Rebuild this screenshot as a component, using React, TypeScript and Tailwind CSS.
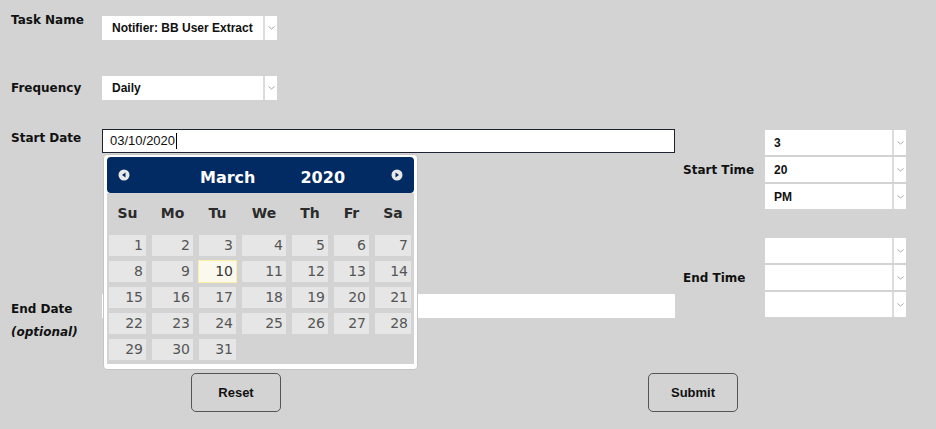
const label = "font-['DejaVu_Sans',Verdana,sans-serif] text-[12px] font-bold leading-[14px] text-[#111]";

const Chevron = () => (
  <svg width="7" height="4" viewBox="0 0 7 4">
    <path d="M0.5 0.5 L3.5 3 L6.5 0.5" fill="none" stroke="#a8a8a8" strokeWidth="1" />
  </svg>
);

const NavIcon = ({ dir }: { dir: "prev" | "next" }) => (
  <svg width="12" height="12" viewBox="0 0 12 12">
    <circle cx="6" cy="6" r="5.5" fill="#e8e8e8" />
    {dir === "prev" ? (
      <path d="M4 6 L7.5 3.5 L7.5 8.5 Z" fill="#022b63" />
    ) : (
      <path d="M8 6 L4.5 3.5 L4.5 8.5 Z" fill="#022b63" />
    )}
  </svg>
);

function Select({ value, className }: { value?: string; className: string }) {
  return (
    <div className={`flex bg-white ${className}`}>
      <div className="flex flex-1 items-center pl-[9px] font-['Liberation_Sans',Arial,sans-serif] text-[12px] font-bold text-[#111]">
        {value}
      </div>
      <div className="flex w-[14px] items-center justify-center border-l-2 border-[#dcdcdc]">
        <Chevron />
      </div>
    </div>
  );
}

const days = ["Su", "Mo", "Tu", "We", "Th", "Fr", "Sa"];
const cols = "grid grid-cols-[39px_43px_39px_46px_38px_37px_38px] gap-x-[4px]";

function Calendar() {
  return (
    <div className="absolute left-[103px] top-[154px] w-[315px] rounded-[4px] border border-[#c5c5c5] bg-white px-[3px] pt-[2px] pb-[5px] font-['DejaVu_Sans',Verdana,sans-serif]">
      <div className="flex h-[36px] items-center rounded-[4px] bg-[#022b63] pl-[11px] pr-[11px] text-[16px] font-bold text-white">
        <NavIcon dir="prev" />
        <span className="ml-[70px] mt-[6px]">March</span>
        <span className="ml-[45px] mt-[6px]">2020</span>
        <span className="ml-auto">
          <NavIcon dir="next" />
        </span>
      </div>
      <div className="bg-[#d3d3d3] px-[1px] pb-[3px]">
        <div className={`${cols} h-[40px] items-center text-center text-[14px] font-bold text-[#2b2b2b]`}>
          {days.map((d) => (
            <span key={d}>{d}</span>
          ))}
        </div>
        <div className={`${cols} mt-[1px] gap-y-[3px]`}>
          {Array.from({ length: 31 }, (_, i) => i + 1).map((n) => (
            <div
              key={n}
              className={
                n === 10
                  ? "h-[23px] border border-[#fcefa1] bg-[#fbf9ee] pr-[3px] text-right text-[14px] leading-[21px] text-[#363636]"
                  : "h-[23px] border border-[#d3d3d3] bg-[#e6e6e6] pr-[3px] text-right text-[14px] leading-[21px] text-[#555]"
              }
            >
              {n}
            </div>
          ))}
        </div>
      </div>
    </div>
  );
}

const button =
  "h-[39px] w-[90px] shrink-0 rounded-[5px] border border-[#555] font-['Liberation_Sans',Arial,sans-serif] text-[13px] font-bold text-[#111]";

export default function App() {
  return (
    <div className="relative flex h-[429px] w-[936px] overflow-hidden bg-[#d3d3d3]">
      <div className="w-[675px] shrink-0 pl-[11px]">
        <div className="flex pt-[13px]">
          <div className={`${label} w-[91px]`}>Task Name</div>
          <Select value="Notifier: BB User Extract" className="mt-[3px] h-[24px] w-[175px] pl-[1px]" />
        </div>
        <div className="mt-[36px] flex">
          <div className={`${label} mt-[5px] w-[91px]`}>Frequency</div>
          <Select value="Daily" className="h-[24px] w-[175px] pl-[1px]" />
        </div>
        <div className="mt-[29px] flex">
          <div className={`${label} mt-[2px] w-[91px]`}>Start Date</div>
          <div className="flex h-[24px] flex-1 items-center border border-[#1d2331] bg-white pl-[7px] font-['Liberation_Sans',Arial,sans-serif] text-[13px] text-[#111]">
            03/10/2020
            <span className="ml-[1px] h-[16px] w-px bg-black" />
          </div>
        </div>
        <div className="mt-[141px] flex">
          <div className={`${label} mt-[4px] w-[91px] !leading-[23px]`}>
            End Date
            <br />
            <i>(optional)</i>
          </div>
          <div className="h-[24px] flex-1 bg-white" />
        </div>
        <div className="mt-[29px] flex">
          <button className={`${button} ml-[180px]`}>Reset</button>
          <button className={`${button} ml-[367px]`}>Submit</button>
        </div>
      </div>

      <div className="pl-[8px] pt-[130px]">
        <div className="flex items-center">
          <div className={`${label} w-[82px]`}>Start Time</div>
          <div className="flex flex-col gap-[2px]">
            <Select value="3" className="h-[25px] w-[141px]" />
            <Select value="20" className="h-[25px] w-[141px]" />
            <Select value="PM" className="h-[25px] w-[141px]" />
          </div>
        </div>
        <div className="mt-[29px] flex items-center">
          <div className={`${label} w-[82px]`}>End Time</div>
          <div className="flex flex-col gap-[2px]">
            <Select className="h-[25px] w-[141px]" />
            <Select className="h-[25px] w-[141px]" />
            <Select className="h-[25px] w-[141px]" />
          </div>
        </div>
      </div>

      <Calendar />
    </div>
  );
}
